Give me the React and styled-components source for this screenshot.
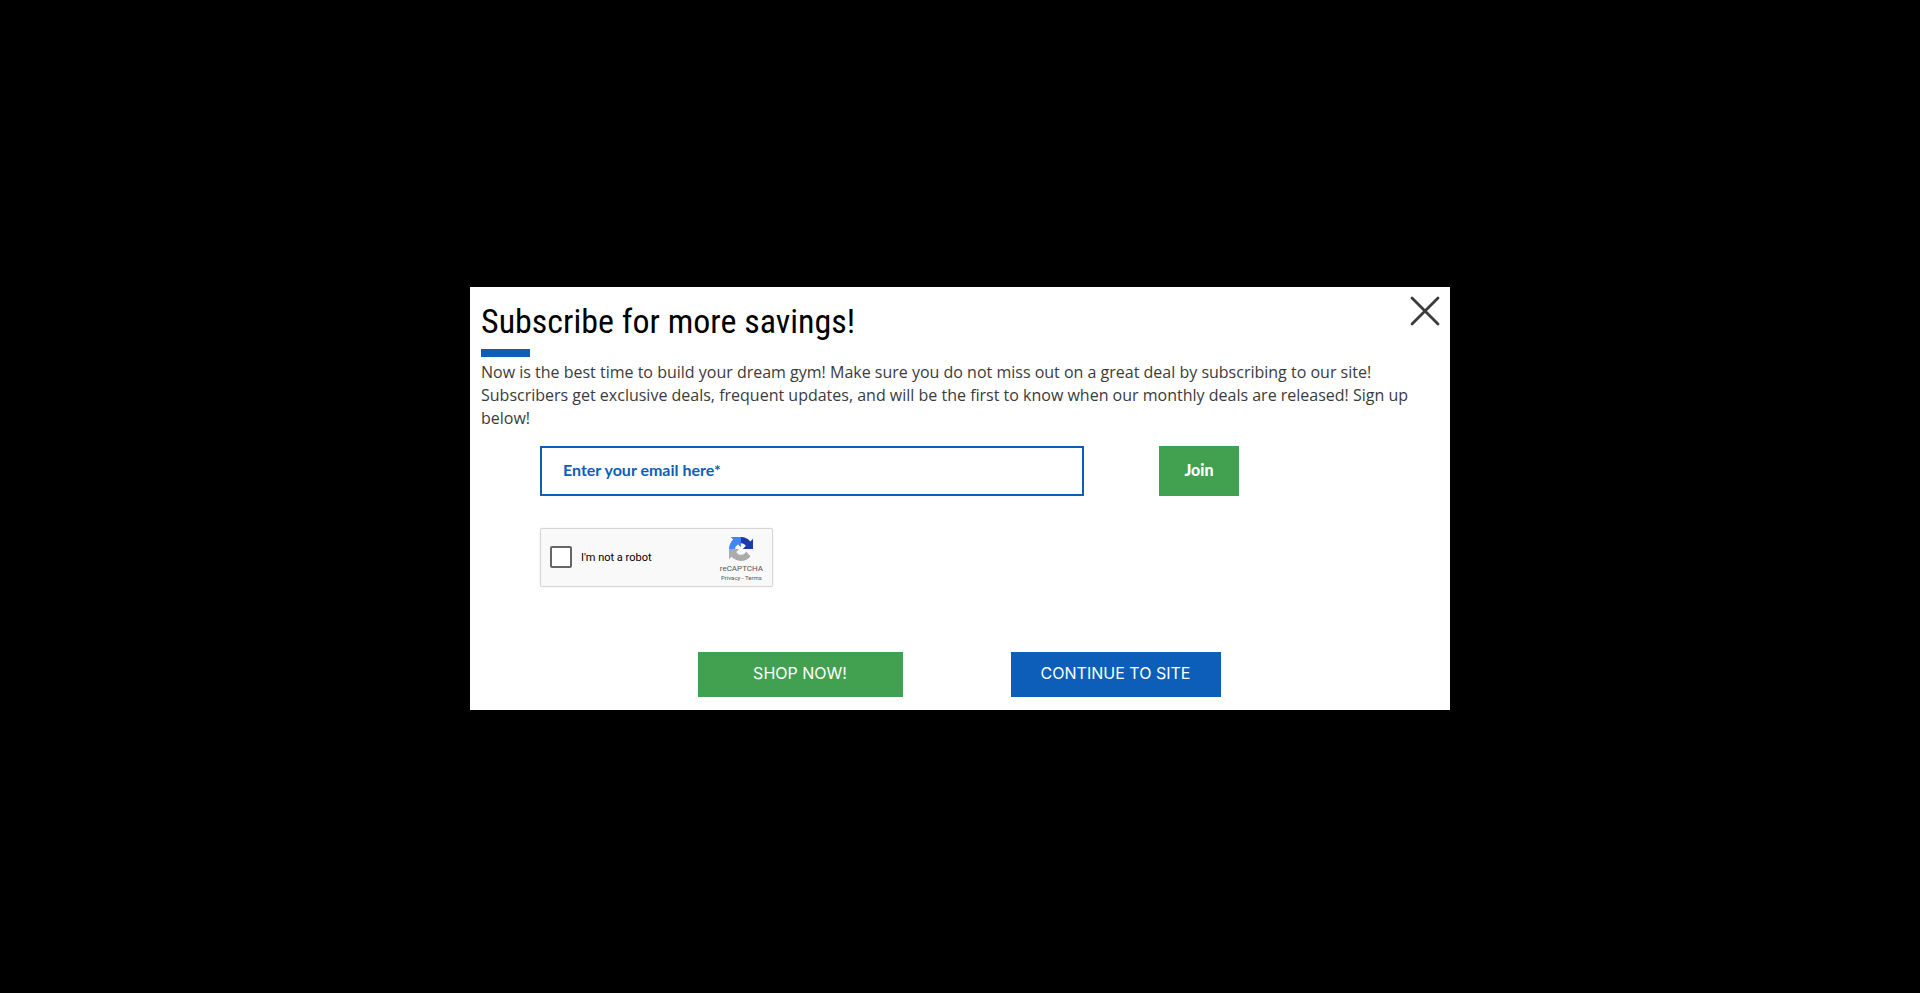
import React, { useState } from 'react';
import styled, { createGlobalStyle } from 'styled-components';

const GlobalStyle = createGlobalStyle`
  * {
    box-sizing: border-box;
  }

  body {
    margin: 0;
    background: #000;
    font-family: 'Open Sans', 'Noto Sans', sans-serif;
  }
`;

const Overlay = styled.div`
  display: flex;
  align-items: center;
  justify-content: center;
  min-height: 100vh;
  padding: 4px 16px 0;
`;

const Modal = styled.section`
  width: 100%;
  max-width: 980px;
  padding: 9px 10px 13px 11px;
  background: #fff;
`;

const Header = styled.header`
  display: flex;
  align-items: flex-start;
  justify-content: space-between;
`;

const Title = styled.h1`
  margin: 0;
  color: #000;
  font-family: 'Roboto Condensed', Roboto, sans-serif;
  font-size: 34px;
  font-weight: 400;
  line-height: 50px;
`;

const CloseButton = styled.button`
  display: flex;
  padding: 0;
  border: 0;
  background: none;
  cursor: pointer;
`;

const Accent = styled.div`
  width: 49px;
  height: 8px;
  margin-top: 3px;
  background: #0d5eb8;
`;

const Message = styled.p`
  margin: 4px 0 0;
  padding-right: 20px;
  color: #3b3b3b;
  font-size: 16px;
  line-height: 23px;
`;

const Form = styled.form`
  margin: 16px 0 0 59px;
`;

const EmailRow = styled.div`
  display: flex;
  gap: 75px;
  padding-right: 201px;
`;

const EmailInput = styled.input`
  flex: 1;
  min-width: 0;
  height: 50px;
  padding: 0 21px 4px;
  border: 2px solid #0d5eb8;
  border-radius: 0;
  background: #fff;
  color: #0d5eb8;
  font-family: Lato, sans-serif;
  font-size: 16px;
  font-weight: 700;

  &::placeholder {
    color: #0d5eb8;
    opacity: 1;
  }
`;

const Button = styled.button`
  width: ${props => props.$width};
  height: ${props => props.$height};
  padding: 0 0 3px;
  border: 0;
  background: ${props => props.$color};
  color: #fff;
  font-family: ${props => props.$font};
  font-size: 16px;
  font-weight: ${props => props.$weight};
  cursor: pointer;
`;

const Captcha = styled.div`
  display: flex;
  align-items: center;
  width: 233px;
  height: 59px;
  margin-top: 32px;
  padding: 0 9px;
  border: 1px solid #d6d6d6;
  border-radius: 2px;
  background: #f9f9f9;
  box-shadow: 0 0 2px rgba(0, 0, 0, 0.1);
  font-family: Roboto, sans-serif;
`;

const Checkbox = styled.input`
  appearance: none;
  width: 22px;
  height: 22px;
  margin: 0 9px 2px 0;
  border: 2px solid #666;
  border-radius: 2px;
  background: #fff;
  cursor: pointer;

  &:checked {
    background: #4a90e2;
  }
`;

const CaptchaLabel = styled.label`
  flex: 1;
  color: #000;
  font-size: 11px;
`;

const Badge = styled.div`
  display: flex;
  flex-direction: column;
  align-items: center;
  padding-top: 3px;
  color: #555;
`;

const BadgeName = styled.span`
  margin-top: 3px;
  font-size: 8px;
  line-height: 10px;
`;

const BadgeLinks = styled.span`
  font-size: 6px;
  line-height: 8px;

  a {
    color: inherit;
    text-decoration: none;
  }
`;

const Actions = styled.div`
  display: flex;
  justify-content: center;
  gap: 108px;
  margin-top: 65px;
  padding-right: 3px;
`;

const CloseIcon = () => (
  <svg width="30" height="30" viewBox="0 0 30 30" aria-hidden="true">
    <path
      d="M2 2L28 28M28 2L2 28"
      fill="none"
      stroke="#3b3b3b"
      strokeWidth="2.8"
      strokeLinecap="round"
    />
  </svg>
);

const CaptchaLogo = () => (
  <svg width="24" height="24" viewBox="0 0 64 64" aria-hidden="true">
    <path
      fill="#1c3aa9"
      d="M64 31.955a33 33 0 0 0-.032-1.37V4.687l-7.16 7.16C50.948 4.674 42.033.093 32.05.093c-10.39 0-19.622 4.96-25.461 12.64l11.736 11.86a15.6 15.6 0 0 1 4.754-5.334c2.05-1.6 4.952-2.906 8.968-2.906.485 0 .86.057 1.135.163 4.976.393 9.288 3.14 11.828 7.124l-8.307 8.307L64 31.953"
    />
    <path
      fill="#4285f4"
      d="M31.862.094a33 33 0 0 0-1.37.032H4.594l7.16 7.16C4.581 13.147 0 22.061 0 32.046c0 10.389 4.96 19.62 12.64 25.46L24.5 45.77a15.6 15.6 0 0 1-5.334-4.754c-1.599-2.05-2.906-4.951-2.906-8.967 0-.485.057-.86.164-1.136.393-4.976 3.139-9.287 7.123-11.827l8.307 8.307L31.86.093"
    />
    <path
      fill="#ababab"
      d="M0 32.045c.001.46.012.916.032 1.37v25.898l7.16-7.16C13.052 59.326 21.967 63.907 31.95 63.907c10.39 0 19.621-4.96 25.461-12.642L45.674 39.405a15.5 15.5 0 0 1-4.753 5.334c-2.05 1.6-4.952 2.906-8.968 2.906-.485 0-.86-.057-1.135-.163-4.976-.393-9.288-3.139-11.828-7.124l8.307-8.307c-10.522.041-22.408.066-27.295-.006"
    />
  </svg>
);

const App = () => {
  const [email, setEmail] = useState('');
  const [open, setOpen] = useState(true);

  const handleSubmit = e => {
    e.preventDefault();
    setEmail('');
  };

  return (
    <>
      <GlobalStyle />
      <Overlay>
        {open && (
          <Modal role="dialog" aria-labelledby="subscribe-title">
            <Header>
              <Title id="subscribe-title">Subscribe for more savings!</Title>
              <CloseButton aria-label="Close" onClick={() => setOpen(false)}>
                <CloseIcon />
              </CloseButton>
            </Header>
            <Accent />
            <Message>
              Now is the best time to build your dream gym! Make sure you do not miss out on a
              great deal by subscribing to our site! Subscribers get exclusive deals, frequent
              updates, and will be the first to know when our monthly deals are released! Sign up
              below!
            </Message>
            <Form onSubmit={handleSubmit}>
              <EmailRow>
                <EmailInput
                  type="email"
                  name="email"
                  aria-label="Email"
                  placeholder="Enter your email here*"
                  value={email}
                  onChange={e => setEmail(e.target.value)}
                  required
                />
                <Button
                  type="submit"
                  $width="80px"
                  $height="50px"
                  $color="#41a151"
                  $font="Lato, sans-serif"
                  $weight="900"
                >
                  Join
                </Button>
              </EmailRow>
              <Captcha>
                <Checkbox type="checkbox" id="robot" />
                <CaptchaLabel htmlFor="robot">I'm not a robot</CaptchaLabel>
                <Badge>
                  <CaptchaLogo />
                  <BadgeName>reCAPTCHA</BadgeName>
                  <BadgeLinks>
                    <a href="#privacy">Privacy</a> - <a href="#terms">Terms</a>
                  </BadgeLinks>
                </Badge>
              </Captcha>
            </Form>
            <Actions>
              <Button
                type="button"
                $width="205px"
                $height="45px"
                $color="#41a151"
                $font="Inter, sans-serif"
                $weight="400"
              >
                SHOP NOW!
              </Button>
              <Button
                type="button"
                $width="210px"
                $height="45px"
                $color="#0d5eb8"
                $font="Inter, sans-serif"
                $weight="400"
                onClick={() => setOpen(false)}
              >
                CONTINUE TO SITE
              </Button>
            </Actions>
          </Modal>
        )}
      </Overlay>
    </>
  );
};

export default App;
